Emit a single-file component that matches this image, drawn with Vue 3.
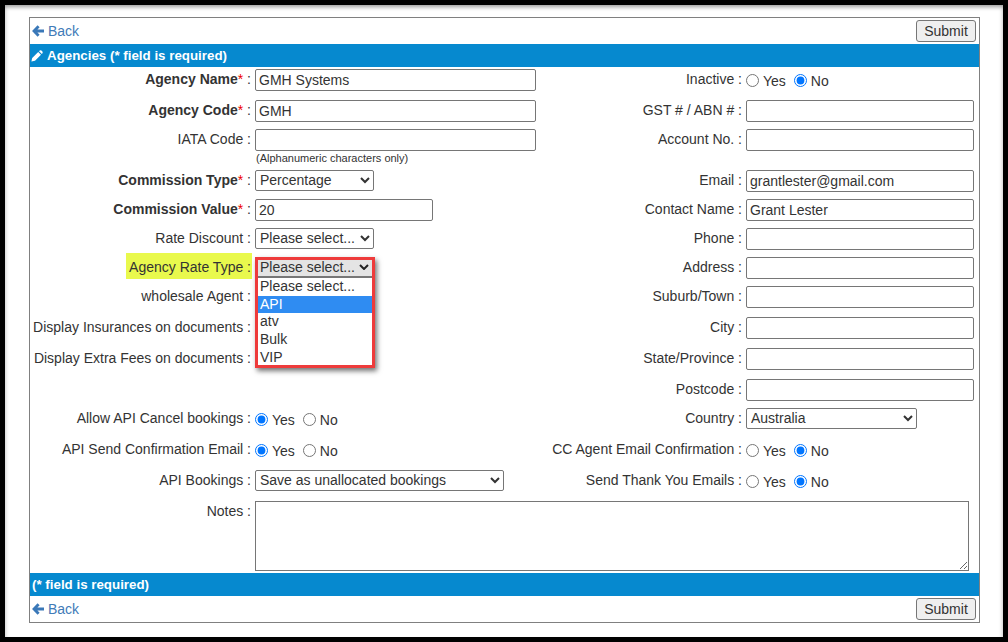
<script setup>
const left = [
  { label: 'Agency Name', req: true, type: 'text', value: 'GMH Systems', h: 31 },
  { label: 'Agency Code', req: true, type: 'text', value: 'GMH', h: 29 },
  { label: 'IATA Code', type: 'text', value: '', hint: '(Alphanumeric characters only)', h: 41 },
  { label: 'Commission Type', req: true, type: 'select', value: 'Percentage', cls: 'sel-s', h: 29 },
  { label: 'Commission Value', req: true, type: 'text', value: '20', cls: 'inp-m', h: 29 },
  { label: 'Rate Discount', type: 'select', value: 'Please select...', cls: 'sel-s', h: 29 },
  { label: 'Agency Rate Type', type: 'menu', value: 'Please select...', h: 29 },
  { label: 'wholesale Agent', type: 'none', h: 31 },
  { label: 'Display Insurances on documents', type: 'none', h: 31 },
  { label: 'Display Extra Fees on documents', type: 'none', h: 31 },
  { label: '', type: 'none', h: 29 },
  { label: 'Allow API Cancel bookings', type: 'radio', yes: true, h: 31 },
  { label: 'API Send Confirmation Email', type: 'radio', yes: true, h: 31 },
  { label: 'API Bookings', type: 'select', value: 'Save as unallocated bookings', cls: 'sel-l', h: 30 }
]
const right = [
  { label: 'Inactive', type: 'radio', yes: false },
  { label: 'GST # / ABN #', type: 'text', value: '' },
  { label: 'Account No.', type: 'text', value: '' },
  { label: 'Email', type: 'text', value: 'grantlester@gmail.com' },
  { label: 'Contact Name', type: 'text', value: 'Grant Lester' },
  { label: 'Phone', type: 'text', value: '' },
  { label: 'Address', type: 'text', value: '' },
  { label: 'Suburb/Town', type: 'text', value: '' },
  { label: 'City', type: 'text', value: '' },
  { label: 'State/Province', type: 'text', value: '' },
  { label: 'Postcode', type: 'text', value: '' },
  { label: 'Country', type: 'select', value: 'Australia', cls: 'sel-c' },
  { label: 'CC Agent Email Confirmation', type: 'radio', yes: false },
  { label: 'Send Thank You Emails', type: 'radio', yes: false }
]
const rows = left.map((l, i) => ({ l, r: right[i], h: l.h, i }))
const options = ['Please select...', 'API', 'atv', 'Bulk', 'VIP']
</script>

<template>
  <div class="frame">
    <div class="page">
      <div class="card">
        <div class="toolbar">
          <a class="back">
            <svg class="arrow" viewBox="0 0 12 12" width="12" height="12"><path d="M6.6 1.2 L2 6 L6.6 10.8 M2.5 6 H12" fill="none" stroke="#3a78b8" stroke-width="2.8"/></svg>
            Back
          </a>
          <button class="submit">Submit</button>
        </div>
        <div class="bar">
          <svg class="pencil" viewBox="0 0 12 12" width="12" height="12"><path d="M.4 11.6 L1.2 8 L7.2 2 L10 4.8 L4 10.8 Z M8 1.2 L8.8 .5 Q9.6 0 10.4 .6 L11.4 1.6 Q12 2.4 11.5 3.2 L10.8 4 Z" fill="#fff"/></svg>
          Agencies (* field is required)
        </div>
        <div class="form">
          <div v-for="row in rows" :key="row.i" class="row" :style="{ height: row.h + 'px' }">
            <template v-for="(f, side) in [row.l, row.r]" :key="side">
              <div class="label" :class="{ strong: f.req }">
                <span v-if="f.label" :class="{ mark: f.type === 'menu' }"><b v-if="f.req">{{ f.label }}</b><template v-else>{{ f.label }}</template><i v-if="f.req">*</i> :</span>
              </div>
              <div class="value" :class="{ stack: f.hint }">
                <input v-if="f.type === 'text'" type="text" class="inp" :class="[f.cls || (side === 1 ? 'inp-r' : 'inp-l')]" :value="f.value" />
                <div v-if="f.hint" class="hint">{{ f.hint }}</div>
                <select v-if="f.type === 'select'" :class="f.cls"><option>{{ f.value }}</option></select>
                <template v-if="f.type === 'radio'">
                  <label class="radio"><input type="radio" :name="'r' + row.i + side" :checked="f.yes" />Yes</label>
                  <label class="radio"><input type="radio" :name="'r' + row.i + side" :checked="!f.yes" />No</label>
                </template>
                <div v-if="f.type === 'menu'" class="menu">
                  <div class="menu-head"><span>Please select...</span>
                    <svg viewBox="0 0 10 6" width="10" height="6"><path d="M1 1 L5 5 L9 1" fill="none" stroke="#222" stroke-width="2"/></svg>
                  </div>
                  <div class="menu-list">
                    <div v-for="o in options" :key="o" class="opt" :class="{ active: o === 'API' }">{{ o }}</div>
                  </div>
                </div>
              </div>
            </template>
          </div>
          <div class="row notes">
            <div class="label">Notes :</div>
            <textarea class="area"></textarea>
          </div>
        </div>
        <div class="bar foot">(* field is required)</div>
        <div class="toolbar bottom">
          <a class="back">
            <svg class="arrow" viewBox="0 0 12 12" width="12" height="12"><path d="M6.6 1.2 L2 6 L6.6 10.8 M2.5 6 H12" fill="none" stroke="#3a78b8" stroke-width="2.8"/></svg>
            Back
          </a>
          <button class="submit">Submit</button>
        </div>
      </div>
    </div>
  </div>
</template>

<style>
html, body { margin: 0; background: #000; overflow: hidden; }
</style>

<style scoped>
.frame {
  width: 1008px;
  height: 642px;
  box-sizing: border-box;
  padding: 5px 5px 5px 5px;
  background: #000;
  font: 14px/16px "Liberation Sans", Arial, sans-serif;
  color: #333;
}
.page {
  height: 632px;
  box-sizing: border-box;
  padding: 12px 0 0 24px;
  background: #fff;
  box-shadow: inset 0 4px 4px -2px #999, inset 4px 0 4px -3px #ddd, inset -4px 0 4px -3px #ddd;
}
.card {
  width: 951px;
  height: 606px;
  box-sizing: border-box;
  border: 1px solid #808080;
  background: #fff;
}
.toolbar {
  height: 26px;
  display: flex;
  align-items: center;
  justify-content: space-between;
  padding: 0 3px 0 2px;
}
.back { color: #3f7bb8; display: flex; align-items: center; gap: 4px; }
.submit {
  width: 60px;
  height: 22px;
  box-sizing: border-box;
  padding: 0;
  background: #efefef;
  border: 1px solid #767676;
  border-radius: 3px;
  font: 14px "Liberation Sans", Arial, sans-serif;
  color: #333;
}
.bar {
  height: 23px;
  display: flex;
  align-items: center;
  gap: 4px;
  padding-left: 2px;
  background: #0689cf;
  color: #fff;
  font-size: 13.33px;
  font-weight: 700;
}
.pencil { flex: none; margin-left: -1px; }
.form { height: 506px; }
.row {
  display: grid;
  grid-template-columns: 225px 281px 210px 232px;
}
.label {
  height: 26px;
  box-sizing: border-box;
  padding-right: 4px;
  line-height: 24px;
  text-align: right;
  white-space: nowrap;
}
.label b { font-weight: 700; }
.label i { color: #e00; font-style: normal; }
.mark {
  display: inline-block;
  position: relative;
  z-index: 0;
}
.mark::before {
  content: "";
  position: absolute;
  z-index: -1;
  left: -3px;
  right: -1px;
  top: -2px;
  height: 26px;
  background: #e9f94d;
}
.value {
  position: relative;
  height: 26px;
  display: flex;
  align-items: center;
}
.stack { flex-direction: column; align-items: flex-start; justify-content: flex-start; padding-top: 2px; box-sizing: border-box; }
.hint { flex: none; font-size: 11px; line-height: 12px; margin-top: 1px; margin-left: 1px; white-space: nowrap; }
.inp {
  flex: none;
  height: 22px;
  box-sizing: border-box;
  padding: 1px 3px;
  border: 1px solid #767676;
  border-radius: 2px;
  font: 14px "Liberation Sans", Arial, sans-serif;
  color: #333;
  background: #fff;
}
.inp-l { width: 281px; }
.inp-m { width: 178px; }
.inp-r { width: 228px; }
select {
  height: 21px;
  margin-top: -2px;
  font: 14px "Liberation Sans", Arial, sans-serif;
  color: #333;
  background: #fff;
  border: 1px solid #767676;
  border-radius: 2px;
  box-sizing: border-box;
}
.sel-s { width: 119px; }
.sel-l { width: 249px; }
.sel-c { width: 171px; }
.radio {
  display: inline-flex;
  align-items: center;
  margin-right: 8px;
  padding-top: 2px;
}
.radio input { margin: -2px 4px 0 0; accent-color: #0075ff; }
.menu {
  position: absolute;
  left: 0;
  top: 2px;
  width: 120px;
  height: 111px;
  box-sizing: border-box;
  border: 3px solid #ee3b3b;
  background: #fff;
  box-shadow: 2px 3px 5px rgba(0, 0, 0, .55);
  z-index: 2;
}
.menu-head {
  height: 18px;
  box-sizing: border-box;
  display: flex;
  align-items: center;
  justify-content: space-between;
  padding: 0 3px 3px 2px;
  background: #e4e4e4;
  border-bottom: 2px solid #777;
}
.menu-list { padding-top: .3px; }
.opt { height: 17.6px; line-height: 17px; padding-left: 2px; }
.active { background: #2f8cf2; color: #fff; }
.notes { height: 72px; }
.notes .label { grid-column: 1; line-height: 26px; }
.area {
  grid-column: 2 / 5;
  width: 714px;
  height: 70px;
  margin-top: 3px;
  box-sizing: border-box;
  border: 1px solid #767676;
  border-radius: 0;
  background: #fff;
}
</style>
